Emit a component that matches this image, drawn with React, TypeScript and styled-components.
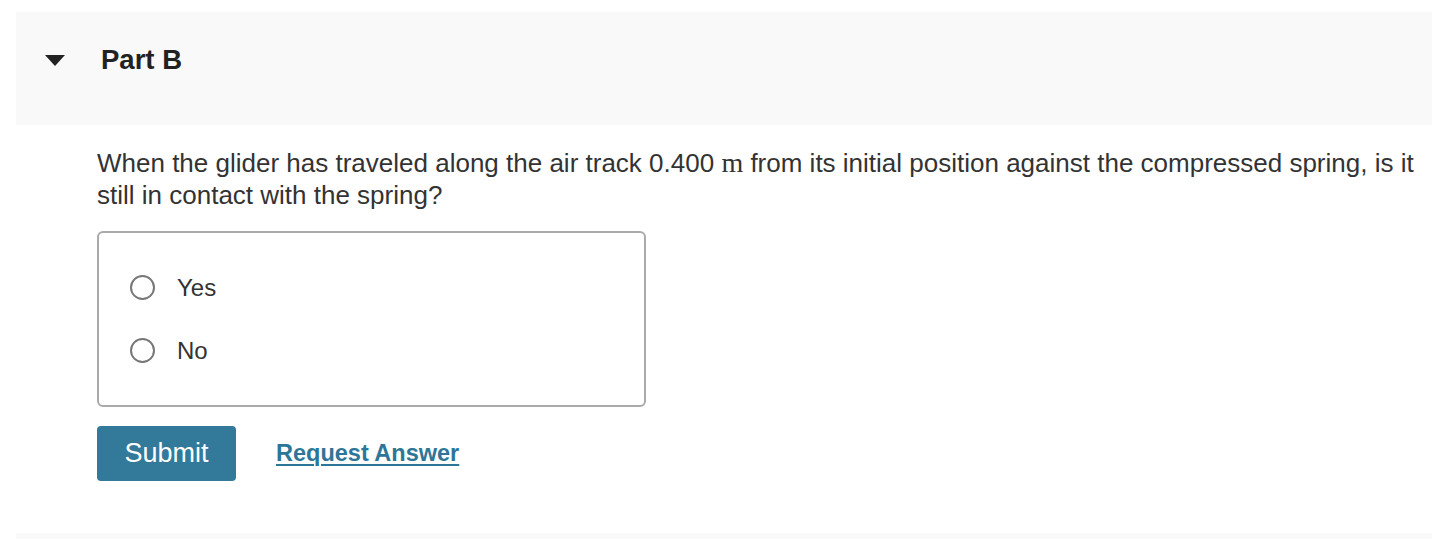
import React, { useState } from "react"
import styled, { createGlobalStyle } from "styled-components"

const Global = createGlobalStyle`
	body {
		margin: 0;
		background: #fff;
		font-family: "Liberation Sans", Arial, Helvetica, sans-serif;
		color: #333;
	}
`

const Wrapper = styled.div`
	padding: 12px 0 0 16px;
`

const PartHeader = styled.div`
	box-sizing: border-box;
	height: 113px;
	background: #f9f9f9;
	padding: 32px 0 0 29px;
`

const HeaderRow = styled.div`
	display: flex;
	align-items: center;
	gap: 36px;
	height: 32px;
`

const Caret = styled.span`
	width: 0;
	height: 0;
	border-left: 10px solid transparent;
	border-right: 10px solid transparent;
	border-top: 11px solid #222;
`

const PartTitle = styled.h2`
	margin: 0;
	font-size: 27.5px;
	line-height: 32px;
	font-weight: bold;
	color: #222;
`

const Body = styled.div`
	padding: 22px 0 52px 81px;
`

const Question = styled.p`
	margin: 0;
	font-size: 26px;
	line-height: 32px;
	color: #333;
`

const MathVar = styled.span`
	font-family: "Liberation Serif", "Times New Roman", serif;
	font-size: 28px;
	line-height: 1;
`

const Choices = styled.div`
	box-sizing: border-box;
	width: 549px;
	margin-top: 20px;
	border: 2px solid #aaa;
	border-radius: 6px;
	padding: 23px 31px;
	display: flex;
	flex-direction: column;
`

const Choice = styled.label`
	display: flex;
	align-items: center;
	gap: 22px;
	height: 63px;
	font-size: 24px;
	color: #333;
	cursor: pointer;
`

const Radio = styled.span<{ $checked: boolean }>`
	box-sizing: border-box;
	width: 25px;
	height: 25px;
	border-radius: 50%;
	border: 2px solid #777;
	display: flex;
	align-items: center;
	justify-content: center;
	&::after {
		content: "";
		width: 11px;
		height: 11px;
		border-radius: 50%;
		background: ${p => (p.$checked ? "#333" : "transparent")};
	}
`

const Actions = styled.div`
	display: flex;
	align-items: center;
	gap: 40px;
	margin-top: 19px;
`

const SubmitButton = styled.button`
	box-sizing: border-box;
	width: 139px;
	height: 55px;
	padding: 0;
	background: #32799a;
	color: #fff;
	border: none;
	border-radius: 4px;
	font-family: "Liberation Sans", Arial, sans-serif;
	font-size: 27px;
	cursor: pointer;
`

const RequestLink = styled.a`
	font-size: 23.5px;
	font-weight: bold;
	color: #2e7697;
	text-decoration: underline;
	text-decoration-thickness: 2px;
	text-underline-offset: 3px;
	cursor: pointer;
`

const Footer = styled.div`
	height: 6px;
	background: #f9f9f9;
`

export default function App() {
	let [answer, setAnswer] = useState<string | null>(null)
	const options = ["Yes", "No"]

	return (
		<>
			<Global />
			<Wrapper>
				<PartHeader>
					<HeaderRow>
						<Caret />
						<PartTitle>Part B</PartTitle>
					</HeaderRow>
				</PartHeader>
				<Body>
					<Question>
						When the glider has traveled along the air track 0.400 <MathVar>m</MathVar> from its initial position against the compressed spring, is it still in contact with the spring?
					</Question>
					<Choices>
						{options.map(opt => (
							<Choice key={opt} onClick={() => setAnswer(opt)}>
								<Radio $checked={answer === opt} />
								{opt}
							</Choice>
						))}
					</Choices>
					<Actions>
						<SubmitButton>Submit</SubmitButton>
						<RequestLink>Request Answer</RequestLink>
					</Actions>
				</Body>
				<Footer />
			</Wrapper>
		</>
	)
}
